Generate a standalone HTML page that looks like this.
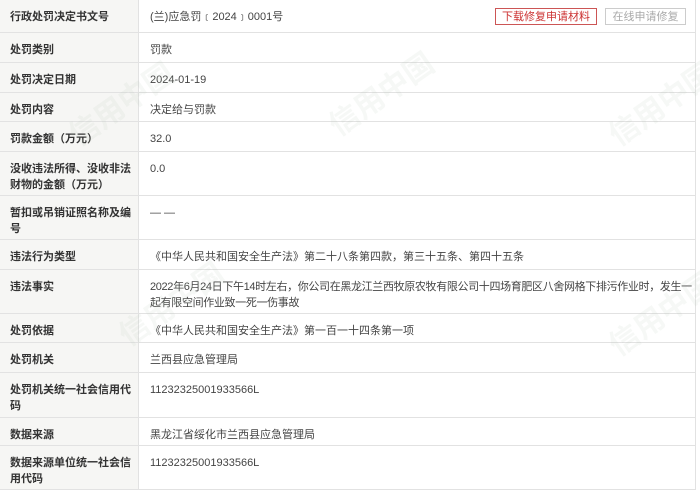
<!DOCTYPE html>
<html><head><meta charset="utf-8"><style>
body{margin:0;width:700px;height:492px;background:#fff;font-family:"Liberation Sans","Noto Sans CJK SC",sans-serif;font-size:11px;color:#333;overflow:hidden;position:relative}
table{border-collapse:collapse;position:absolute;left:-1px;top:-1px;width:697px;table-layout:fixed}
td{border:1px solid #e2e2e2;vertical-align:top;padding:9px 8px 0 10px;line-height:16px;box-sizing:border-box}
td.l{width:139px;background:#f6f6f4;font-weight:bold;color:#333}
td.l div{width:123px}
td.v{padding-left:11px;padding-right:0;color:#444}
.b1,.b2{position:absolute;top:8px;height:17px;font-size:11px;line-height:16px;text-align:center;box-sizing:border-box}
.b1{left:495px;width:102px;border:1px solid #c55;color:#c33;background:#fff}
.b2{left:605px;width:81px;border:1px solid #ccc;color:#aaa;background:#fff}
.wm{position:absolute;color:rgba(180,200,180,.12);font-size:30px;transform:rotate(-35deg);font-weight:bold;white-space:nowrap}
</style></head><body>
<table>
<tr style="height:33px"><td class="l"><div>行政处罚决定书文号</div></td><td class="v">(兰)应急罚﹝2024﹞0001号</td></tr>
<tr style="height:30px"><td class="l"><div>处罚类别</div></td><td class="v">罚款</td></tr>
<tr style="height:30px"><td class="l"><div>处罚决定日期</div></td><td class="v">2024-01-19</td></tr>
<tr style="height:29px"><td class="l"><div>处罚内容</div></td><td class="v">决定给与罚款</td></tr>
<tr style="height:30px"><td class="l"><div>罚款金额（万元）</div></td><td class="v">32.0</td></tr>
<tr style="height:44px"><td class="l"><div>没收违法所得、没收非法财物的金额（万元）</div></td><td class="v">0.0</td></tr>
<tr style="height:44px"><td class="l"><div>暂扣或吊销证照名称及编号</div></td><td class="v">— —</td></tr>
<tr style="height:30px"><td class="l"><div>违法行为类型</div></td><td class="v">《中华人民共和国安全生产法》第二十八条第四款，第三十五条、第四十五条</td></tr>
<tr style="height:44px"><td class="l"><div>违法事实</div></td><td class="v" style="letter-spacing:-0.35px">2022年6月24日下午14时左右，你公司在黑龙江兰西牧原农牧有限公司十四场育肥区八舍网格下排污作业时，发生一起有限空间作业致一死一伤事故</td></tr>
<tr style="height:29px"><td class="l"><div>处罚依据</div></td><td class="v">《中华人民共和国安全生产法》第一百一十四条第一项</td></tr>
<tr style="height:30px"><td class="l"><div>处罚机关</div></td><td class="v">兰西县应急管理局</td></tr>
<tr style="height:45px"><td class="l"><div>处罚机关统一社会信用代码</div></td><td class="v">11232325001933566L</td></tr>
<tr style="height:28px"><td class="l"><div>数据来源</div></td><td class="v">黑龙江省绥化市兰西县应急管理局</td></tr>
<tr style="height:44px"><td class="l"><div>数据来源单位统一社会信用代码</div></td><td class="v">11232325001933566L</td></tr>
</table>
<div class="b1">下载修复申请材料</div>
<div class="b2">在线申请修复</div>
<div class="wm" style="left:60px;top:80px">信用中国</div>
<div class="wm" style="left:320px;top:70px">信用中国</div>
<div class="wm" style="left:600px;top:80px">信用中国</div>
<div class="wm" style="left:110px;top:280px">信用中国</div>
<div class="wm" style="left:600px;top:290px">信用中国</div>
</body></html>
